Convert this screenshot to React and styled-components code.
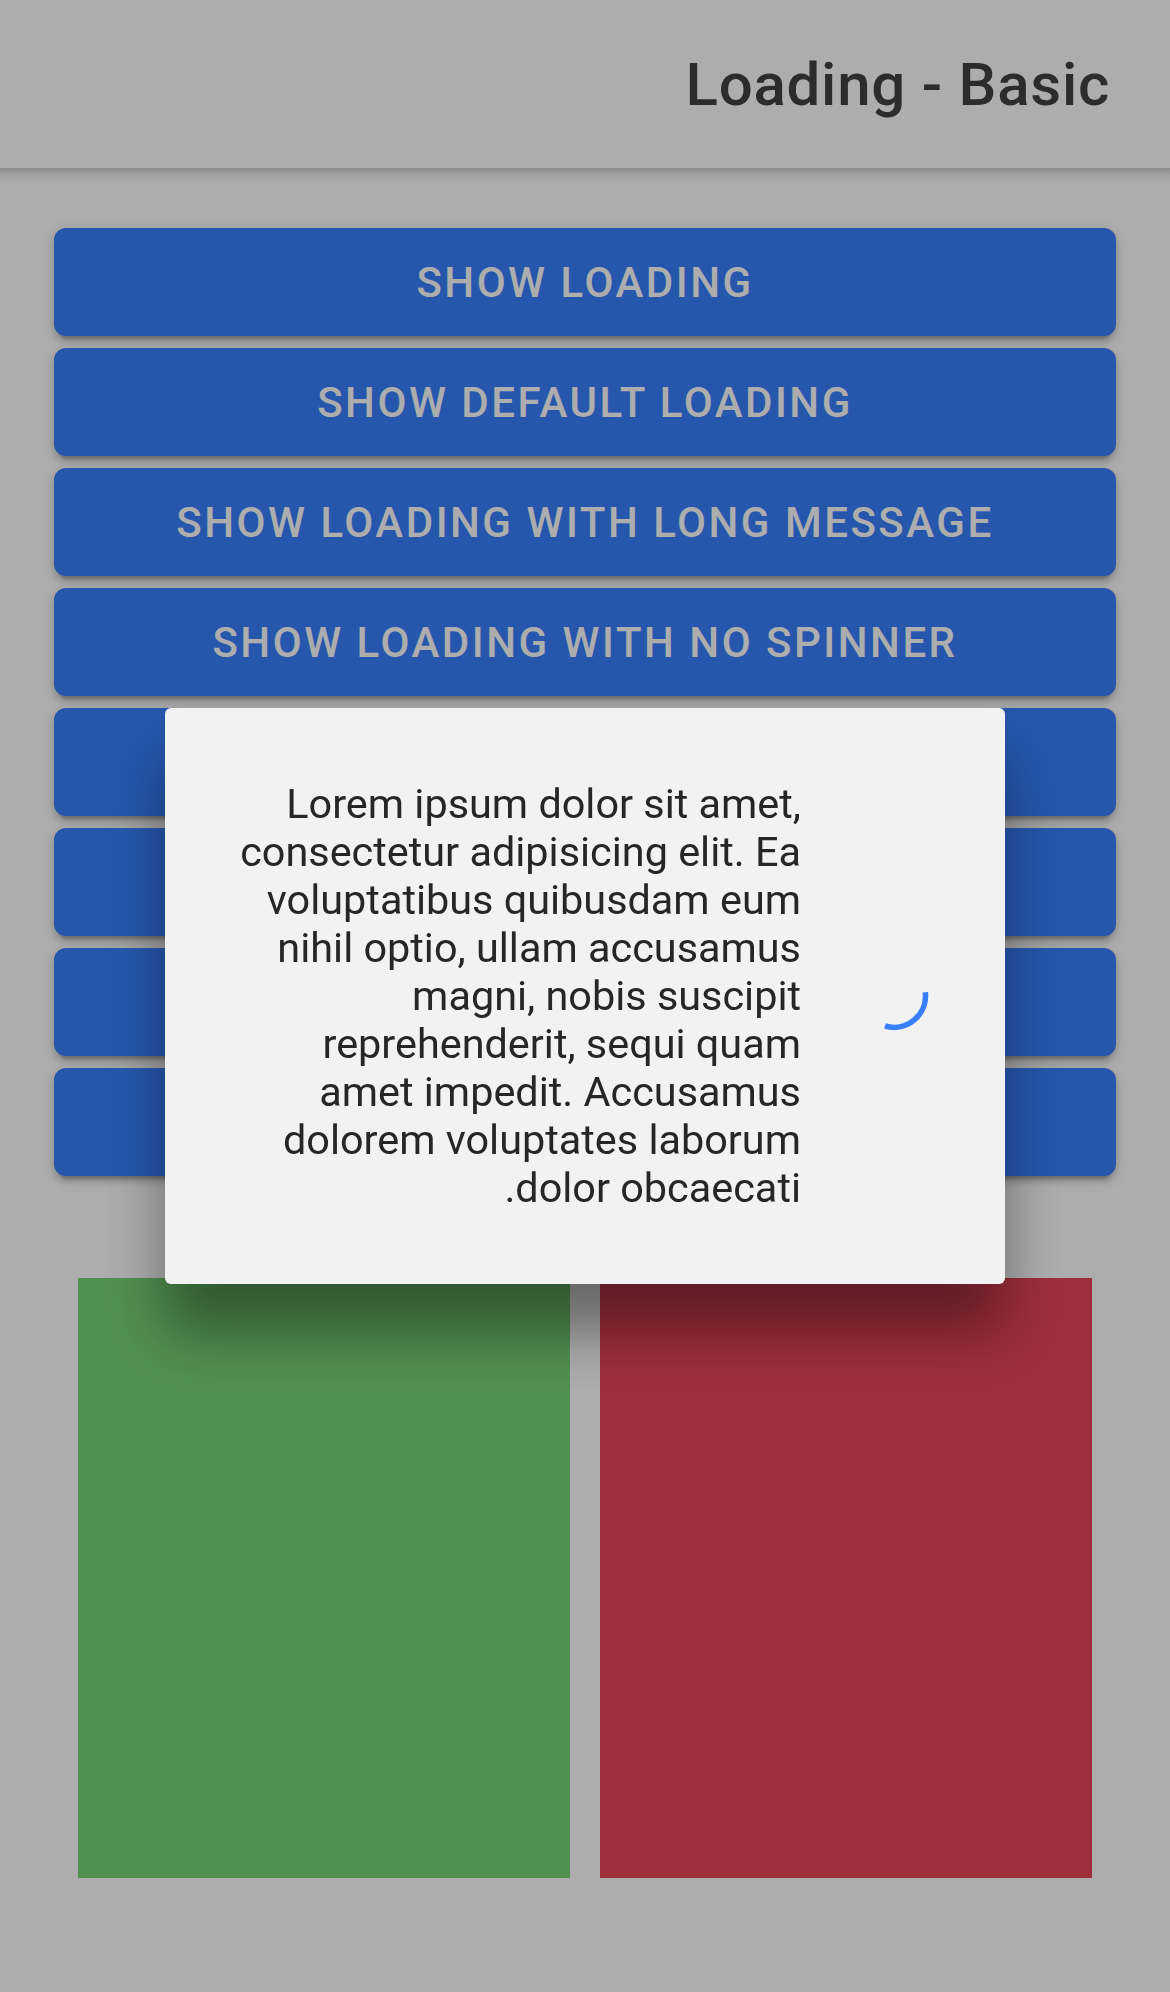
import React from "react";
import styled, { createGlobalStyle } from "styled-components";

// the page is laid out at 3x (a 390px wide phone shot at dpr 3)

const GlobalStyle = createGlobalStyle`
  html, body {
    margin: 0;
    padding: 0;
    background: #ffffff;
    font-family: Roboto, "Noto Sans", "Liberation Sans", sans-serif;
  }
`;

const Page = styled.div`
  position: relative;
  min-height: 1992px;
  background: #ffffff;
`;

const Header = styled.header`
  position: relative;
  height: 168px;
  display: flex;
  align-items: center;
  background: #ffffff;
  &::after {
    content: "";
    position: absolute;
    left: 0;
    right: 0;
    bottom: -15px;
    height: 15px;
    background: linear-gradient(
      to bottom,
      rgba(0, 0, 0, 0.2),
      rgba(0, 0, 0, 0.06) 45%,
      rgba(0, 0, 0, 0)
    );
  }
`;

const Title = styled.h1`
  margin: 0;
  padding: 0 60px;
  font-size: 60px;
  font-weight: 500;
  letter-spacing: 0.0125em;
  color: #424242;
`;

const Content = styled.main`
  padding: 48px;
`;

const Button = styled.button`
  display: block;
  width: calc(100% - 12px);
  height: 108px;
  margin: 12px 6px;
  border: 0;
  border-radius: 12px;
  background: #3880ff;
  color: #ffffff;
  font-family: inherit;
  font-size: 42px;
  font-weight: 500;
  letter-spacing: 0.06em;
  text-transform: uppercase;
  box-shadow: 0 9px 3px -6px rgba(0, 0, 0, 0.2), 0 6px 6px 0 rgba(0, 0, 0, 0.14),
    0 3px 15px 0 rgba(0, 0, 0, 0.12);
`;

const SquareRow = styled.div`
  display: grid;
  grid-template-columns: 1fr 1fr;
  gap: 30px;
  padding: 90px 30px 0;
`;

const Square = styled.div`
  height: 600px;
  background: ${(props) => props.color};
`;

const LoadingHost = styled.div`
  position: fixed;
  inset: 0;
  display: flex;
  align-items: center;
  justify-content: center;
  z-index: 10;
`;

const Backdrop = styled.div`
  position: absolute;
  inset: 0;
  background: rgba(0, 0, 0, 0.32);
`;

const Wrapper = styled.div`
  position: relative;
  display: flex;
  align-items: center;
  box-sizing: border-box;
  max-width: 840px;
  padding: 72px;
  border-radius: 6px;
  background: #f2f2f2;
  box-shadow: 0 48px 60px rgba(0, 0, 0, 0.4);
`;

const SpinnerBox = styled.div`
  flex-shrink: 0;
  width: 84px;
  height: 84px;
`;

const Message = styled.div`
  margin-inline-start: 48px;
  font-size: 41.4px;
  line-height: 48px;
  color: #262626;
`;

const buttons = [
  "Show Loading",
  "Show Default Loading",
  "Show Loading with long message",
  "Show Loading with no spinner",
  "Show Translucent Loading",
  "Show Custom Class Loading",
  "Show Backdrop Loading",
  "Show Loading & Navigate",
];

const Spinner = () => (
  <SpinnerBox>
    <svg width="84" height="84" viewBox="0 0 84 84">
      <path
        d="M 76.3 38.2 A 31.5 31.5 0 0 1 36 72"
        fill="none"
        stroke="#3880ff"
        strokeWidth="5.6"
      />
    </svg>
  </SpinnerBox>
);

export default function App() {
  return (
    <Page dir="rtl">
      <GlobalStyle />
      <Header>
        <Title>Loading - Basic</Title>
      </Header>
      <Content>
        {buttons.map((label) => (
          <Button key={label}>{label}</Button>
        ))}
        <SquareRow>
          <Square color="#eb445a" />
          <Square color="#77d576" />
        </SquareRow>
      </Content>
      <LoadingHost>
        <Backdrop />
        <Wrapper>
          <Spinner />
          <Message>
            Lorem ipsum dolor sit amet, consectetur adipisicing elit. Ea
            voluptatibus quibusdam eum nihil optio, ullam accusamus magni, nobis
            suscipit reprehenderit, sequi quam amet impedit. Accusamus dolorem
            voluptates laborum dolor obcaecati.
          </Message>
        </Wrapper>
      </LoadingHost>
    </Page>
  );
}
